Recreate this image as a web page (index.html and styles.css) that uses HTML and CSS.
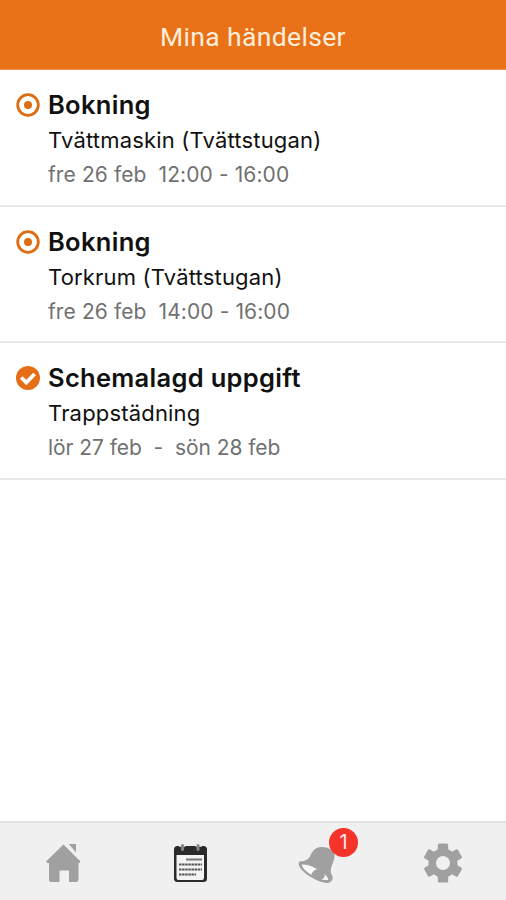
FILE: index.html
```html
<!DOCTYPE html>
<html lang="sv">
<head>
<meta charset="utf-8">
<title>Mina händelser</title>
<link rel="stylesheet" href="styles.css">
</head>
<body>
<header class="header"><h1 class="header-title">Mina händelser</h1></header>
<main class="events">
  <article class="event">
    <svg class="event-icon" viewBox="0 0 24 24"><circle cx="12" cy="12" r="10.3" fill="none" stroke="#dc6d14" stroke-width="2.8"/><circle cx="12" cy="12" r="4" fill="#dc6d14"/></svg>
    <div class="event-body">
      <h2 class="event-type">Bokning</h2>
      <p class="event-name">Tvättmaskin (Tvättstugan)</p>
      <p class="event-time">fre 26 feb&nbsp; 12:00 - 16:00</p>
    </div>
  </article>
  <article class="event">
    <svg class="event-icon" viewBox="0 0 24 24"><circle cx="12" cy="12" r="10.3" fill="none" stroke="#dc6d14" stroke-width="2.8"/><circle cx="12" cy="12" r="4" fill="#dc6d14"/></svg>
    <div class="event-body">
      <h2 class="event-type">Bokning</h2>
      <p class="event-name">Torkrum (Tvättstugan)</p>
      <p class="event-time">fre 26 feb&nbsp; 14:00 - 16:00</p>
    </div>
  </article>
  <article class="event">
    <svg class="event-icon" viewBox="0 0 24 24"><circle cx="12" cy="12" r="12" fill="#e66e16"/><path d="M5.300 11.500l5 5 8.300-8.500" fill="none" stroke="#fff" stroke-width="3.800"/></svg>
    <div class="event-body">
      <h2 class="event-type">Schemalagd uppgift</h2>
      <p class="event-name">Trappstädning</p>
      <p class="event-time event-time-range">lör 27 feb&nbsp; -&nbsp; sön 28 feb</p>
    </div>
  </article>
</main>
<nav class="tabs">
  <a class="tab"><svg class="tab-icon" viewBox="0 0 40 40" fill="#a0a0a0"><path d="M20.500 1.500L37 18q.8 1.600-1 2h-.500v16.500q0 2.500-2.500 2.500H26V27.500H16.500V39H8.500q-2.500 0-2.500-2.500V20H4.500q-1.800-.4-1-2z"/><path d="M25.800 1H33v8.500z"/></svg></a>
  <a class="tab"><svg class="tab-icon" viewBox="0 0 40 40"><rect x="4" y="3" width="33" height="36" rx="3.500" fill="#2b2b2b"/><path d="M6.500 12h27.500v23q0 2-2 2H8.500q-2 0-2-2z" fill="#f4f4f4"/><path d="M9 3.800v-.8a3.200 3.200 0 0 1 6.400 0v.8zM25.500 3.800v-.8a3.200 3.200 0 0 1 6.400 0v.8z" fill="#eee"/><path d="M12.500 2.500v4M28 2.500v4" stroke="#858585" stroke-width="3" stroke-linecap="round"/><path d="M16 16.500h16" stroke="#777" stroke-width="2"/><path d="M9 21.500h23M9 26.500h23M9 31.500h17" stroke="#555" stroke-width="2" stroke-dasharray="2.500 .6"/></svg></a>
  <a class="tab"><svg class="tab-icon" viewBox="34 84 120 120"><path d="M46 139C62 138 72 133 77 122 84 106 94 95 112 96c18 0 35 10 38 24 0 15-8 28-11 40-2 9 0 17 4 23 3 10-2 19-14 21C102 204 43 170 42 146q0-6 4-7z" fill="#a0a0a0"/><path d="M51 149C70 147 90 158 108 169c13 8 22 18 23 26-9 1-18-1-27-4C80 182 54 164 51 149z" fill="#f8f8f8"/><path d="M100 161c14 5 22 14 20 24-5 13-31 12-41-2 2-12 9-19 21-22z" fill="#a0a0a0"/></svg><span class="badge">1</span></a>
  <a class="tab"><svg class="tab-icon" viewBox="0 0 40 40"><g fill="#a0a0a0"><circle cx="20" cy="20" r="14.500"/><rect x="14.800" y=".5" width="10.400" height="39" rx="1.500"/><rect x="14.800" y=".5" width="10.400" height="39" rx="1.500" transform="rotate(60 20 20)"/><rect x="14.800" y=".5" width="10.400" height="39" rx="1.500" transform="rotate(120 20 20)"/></g><circle cx="20" cy="20" r="7" fill="#f0f0f0"/></svg></a>
</nav>
</body>
</html>
```
FILE: styles.css
```css
* { box-sizing: border-box; }

body {
  margin: 0;
  height: 900px;
  display: flex;
  flex-direction: column;
  background: #fff;
  color: #111;
  font-family: Inter, "Liberation Sans", sans-serif;
  overflow: hidden;
}

h1, h2, p { margin: 0; }

.header {
  height: 70px;
  padding-top: 4px;
  display: flex;
  align-items: center;
  justify-content: center;
  background: #e97117;
  border-bottom: 1px solid #ed9653;
}

.header-title {
  color: #ffeedb;
  font: 400 26.5px/32px Roboto, sans-serif;
  letter-spacing: 0.35px;
}

.events { flex: 1; }

.event {
  height: 136.7px;
  display: flex;
  gap: 8px;
  padding: 23px 16px 0;
  border-bottom: 2px solid #e9e9e9;
}

.event-icon { width: 24px; height: 24px; flex: none; }

.event-body { margin-top: -4px; white-space: nowrap; }

.event-type {
  font-size: 25.5px;
  line-height: 32px;
  font-weight: 600;
  letter-spacing: 0.3px;
}

.event-name {
  margin-top: 3px;
  font-size: 22px;
  line-height: 32px;
  letter-spacing: 0.18px;
}

.event-time {
  margin-top: 3px;
  font-size: 21px;
  line-height: 32px;
  letter-spacing: 0.1px;
  color: #717171;
}

.event-time-range { letter-spacing: -0.05px; }

.tabs {
  height: 79px;
  display: grid;
  grid-template-columns: repeat(4, 1fr);
  background: #f0f0f0;
  border-top: 2px solid #e2e2e2;
}

.tab {
  position: relative;
  display: flex;
  justify-content: center;
  padding-top: 20px;
}

.tab-icon { width: 40px; height: 40px; }

.badge {
  position: absolute;
  top: 5px;
  left: 76px;
  width: 29px;
  height: 29px;
  border-radius: 50%;
  background: #f4332b;
  color: #ffe9e4;
  font-size: 20px;
  line-height: 29px;
  text-align: center;
}
```
